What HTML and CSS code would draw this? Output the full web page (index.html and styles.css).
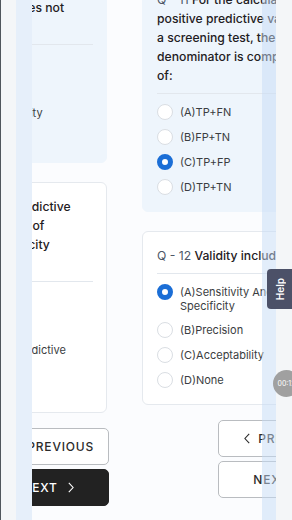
FILE: index.html
```html
<!DOCTYPE html>
<html lang="en">
<head>
<meta charset="utf-8">
<title>Quiz</title>
<link rel="stylesheet" href="styles.css">
</head>
<body>
<div class="screen">
  <div class="edge"></div>
  <div class="gutter"></div>
  <div class="strip"></div>
  <main class="viewport">
    <div class="track">
      <section class="slide slide-prev">
        <article class="card card-active">
          <p class="q"><span class="qn">Q - 9</span> Validity of a<br>Screening test does not<br>include:</p>
          <div class="rule"></div>
          <ul class="opts">
            <li class="opt"><span class="radio"></span><span class="otext">(A)Reliability</span></li>
            <li class="opt"><span class="radio"></span><span class="otext">(B)Accuracy</span></li>
            <li class="opt"><span class="radio"></span><span class="otext">(C)Reproducibility</span></li>
            <li class="opt"><span class="radio"></span><span class="otext">(D)None</span></li>
          </ul>
        </article>
        <article class="card">
          <p class="q"><span class="qn">Q - 10</span> positive predictive<br>value is a product of<br>sensitivity/specificity<br>and prevalence</p>
          <div class="rule"></div>
          <ul class="opts">
            <li class="opt"><span class="radio"></span><span class="otext">(A)Sensitivity</span></li>
            <li class="opt"><span class="radio"></span><span class="otext">(B)Specificity</span></li>
            <li class="opt"><span class="radio"></span><span class="otext">(C)Negative predictive<br>value</span></li>
            <li class="opt"><span class="radio"></span><span class="otext">(D)None</span></li>
          </ul>
        </article>
        <div class="nav">
          <button class="btn btn-prev"><svg class="chev" viewBox="0 0 6 11"><polyline points="5.2,0.8 0.9,5.5 5.2,10.2"/></svg><span>PREVIOUS</span></button>
          <button class="btn btn-next btn-dark"><span>NEXT</span><svg class="chev" viewBox="0 0 6 11"><polyline points="0.8,0.8 5.1,5.5 0.8,10.2"/></svg></button>
        </div>
      </section>

      <section class="slide slide-cur">
        <article class="card card-active">
          <p class="q"><span class="qn">Q - 11</span> For the calculation of<br>positive predictive value of<br>a screening test, the<br>denominator is composed<br>of:</p>
          <div class="rule"></div>
          <ul class="opts">
            <li class="opt"><span class="radio"></span><span class="otext">(A)TP+FN</span></li>
            <li class="opt"><span class="radio"></span><span class="otext">(B)FP+TN</span></li>
            <li class="opt"><span class="radio radio-on"></span><span class="otext">(C)TP+FP</span></li>
            <li class="opt"><span class="radio"></span><span class="otext">(D)TP+TN</span></li>
          </ul>
        </article>
        <article class="card">
          <p class="q"><span class="qn">Q - 12</span> Validity includes:</p>
          <div class="rule"></div>
          <ul class="opts">
            <li class="opt"><span class="radio radio-on"></span><span class="otext">(A)Sensitivity And<br>Specificity</span></li>
            <li class="opt"><span class="radio"></span><span class="otext">(B)Precision</span></li>
            <li class="opt"><span class="radio"></span><span class="otext">(C)Acceptability</span></li>
            <li class="opt"><span class="radio"></span><span class="otext">(D)None</span></li>
          </ul>
        </article>
        <div class="nav">
          <button class="btn btn-prev"><svg class="chev" viewBox="0 0 6 11"><polyline points="5.2,0.8 0.9,5.5 5.2,10.2"/></svg><span>PREVIOUS</span></button>
          <button class="btn btn-next"><span>NEXT</span><svg class="chev" viewBox="0 0 6 11"><polyline points="0.8,0.8 5.1,5.5 0.8,10.2"/></svg></button>
        </div>
      </section>
    </div>
    <div class="tint"></div>
  </main>
  <div class="rail"></div>
  <button class="help"><span>Help</span></button>
  <div class="timer">00:12</div>
</div>
</body>
</html>
```

FILE: styles.css
```css
* { box-sizing: border-box; }
html, body { margin: 0; padding: 0; }
body {
  width: 292px;
  height: 520px;
  overflow: hidden;
  font-family: Inter, "Noto Sans", sans-serif;
  background: #f4f6f8;
}
.screen {
  position: relative;
  display: flex;
  width: 292px;
  height: 520px;
  overflow: hidden;
}
.edge { flex: none; width: 1px; background: #50565c; }
.gutter { flex: none; width: 15px; background: #f4f6f8; }
.strip { flex: none; width: 16px; background: #e6effa; }
.rail { flex: none; width: 16px; background: #f4f6f8; }
.viewport {
  position: relative;
  flex: none;
  width: 244px;
  height: 520px;
  overflow: hidden;
  background: #fbfcfe;
}
.track {
  display: flex;
  align-items: flex-start;
  gap: 33px;
  margin-left: -121px;
  margin-top: -36px;
}
.slide {
  flex: none;
  width: 198px;
  display: flex;
  flex-direction: column;
  gap: 19px;
}
.slide-cur { margin-top: 11px; }
.card {
  width: 196px;
  padding: 14px 13px 16px 14px;
  border: 1px solid #e5e9ee;
  border-radius: 6px;
  background: #ffffff;
}
.card-active {
  background: #eef5fc;
  border-color: #eef5fc;
}
.q {
  margin: 0;
  font-size: 12.2px;
  line-height: 19px;
  font-weight: 500;
  color: #1f2023;
  white-space: nowrap;
}
.qn { color: #4d5666; font-weight: 400; }
.rule {
  height: 1px;
  background: #e2e7ed;
  margin: 8px 0 10px;
}
.opts {
  list-style: none;
  margin: 0;
  padding: 0;
  display: flex;
  flex-direction: column;
  gap: 9px;
}
.opt {
  display: flex;
  align-items: flex-start;
  gap: 7px;
}
.radio {
  flex: none;
  width: 16px;
  height: 16px;
  border-radius: 50%;
  border: 1px solid #dadee3;
  background: #fff;
}
.radio-on { border: 5px solid #1b6ed6; }
.otext {
  padding-top: 1px;
  font-size: 11px;
  line-height: 14px;
  color: #3a3d41;
  white-space: nowrap;
}
.nav {
  align-self: flex-end;
  margin-top: -4px;
  width: 122px;
  display: flex;
  flex-direction: column;
  gap: 4px;
}
.btn {
  height: 37px;
  display: flex;
  align-items: center;
  border: 1px solid #b9bcc0;
  border-radius: 5px;
  background: #fff;
  color: #2b2b2b;
  font-family: Inter, "Noto Sans", sans-serif;
  font-size: 12px;
  font-weight: 500;
  letter-spacing: 0.8px;
  padding: 0;
}
.btn-prev { justify-content: space-between; padding: 0 14px 0 25px; }
.btn-next { justify-content: center; gap: 10px; }
.btn-dark { background: #222222; border-color: #222222; color: #fff; }
.chev {
  width: 6px;
  height: 11px;
  fill: none;
  stroke: currentColor;
  stroke-width: 1.1;
}
.tint {
  position: absolute;
  top: 0;
  right: 0;
  bottom: 0;
  width: 14px;
  background: rgba(198, 220, 246, 0.5);
  pointer-events: none;
}
.help {
  position: absolute;
  left: 267px;
  top: 269px;
  width: 25px;
  height: 40px;
  padding: 0;
  border: 0;
  border-radius: 4px 0 0 4px;
  background: #4c5168;
  color: #fff;
  display: flex;
  align-items: center;
  justify-content: center;
  font-family: Inter, "Noto Sans", sans-serif;
  font-size: 10px;
  font-weight: 600;
}
.help span {
  writing-mode: vertical-rl;
  transform: rotate(180deg);
}
.timer {
  position: absolute;
  left: 273px;
  top: 370px;
  width: 27px;
  height: 27px;
  border-radius: 50%;
  background: #a0a0a0;
  color: #fff;
  font-size: 7px;
  display: flex;
  align-items: center;
  justify-content: center;
}
```
